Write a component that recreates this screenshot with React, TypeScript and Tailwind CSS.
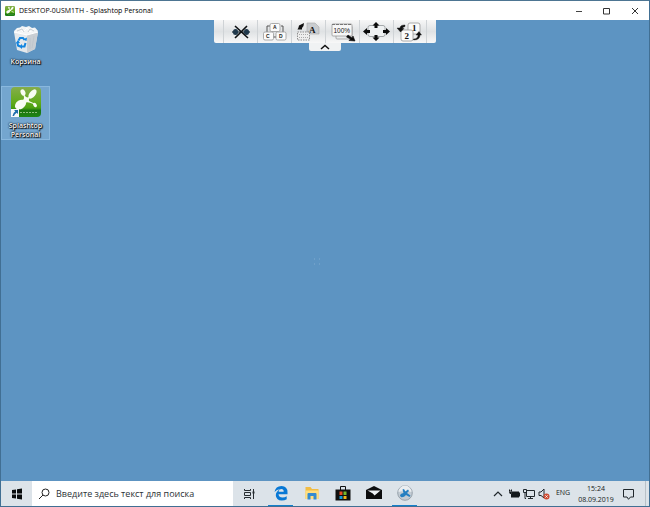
import type { ReactNode } from 'react';

const tools = [
  { label: 'Disconnect', icon: <DisconnectIcon /> },
  { label: 'Ctrl Alt Del', icon: <KeysIcon /> },
  { label: 'Keyboard', icon: <KeyboardIcon /> },
  { label: 'Scale', icon: <ScaleIcon /> },
  { label: 'Full screen', icon: <FullScreenIcon /> },
  { label: 'Switch monitor', icon: <MonitorIcon /> },
];

const apps = [
  { label: 'Microsoft Edge', icon: <EdgeIcon />, active: true },
  { label: 'Explorer', icon: <FolderIcon />, active: false },
  { label: 'Store', icon: <StoreIcon />, active: false },
  { label: 'Mail', icon: <MailIcon />, active: false },
  { label: 'Splashtop Streamer', icon: <StreamerIcon />, active: true },
];

function SplashLogo({ className }: { className: string }) {
  return (
    <svg className={className} viewBox="0 0 30 30" aria-hidden="true">
      <defs>
        <linearGradient id="splash" x1="0" y1="0" x2="0" y2="1">
          <stop offset="0" stopColor="#86ad4c" />
          <stop offset="0.5" stopColor="#62ab1c" />
          <stop offset="0.7" stopColor="#4aa010" />
          <stop offset="0.78" stopColor="#1b7410" />
          <stop offset="1" stopColor="#1f8516" />
        </linearGradient>
      </defs>
      <rect width="30" height="30" rx="4" fill="url(#splash)" />
      <g fill="#f8fcf2">
        <ellipse cx="12" cy="5.500" rx="2.300" ry="3.200" transform="rotate(-25 12 5.500)" />
        <ellipse cx="21.500" cy="7" rx="3" ry="5.500" transform="rotate(38 21.500 7)" />
        <ellipse cx="9.500" cy="17.500" rx="6" ry="4.300" transform="rotate(-32 9.500 17.500)" />
        <ellipse cx="24" cy="18" rx="1.600" ry="2.400" transform="rotate(-35 24 18)" />
        <path d="M11 13.500Q14 12.500 12.500 8h1Q15 11.500 18 10l.5 1Q17 13.500 19 14.500l4.500 2-.5.800Q18 15 16 15.200T13 18z" />
      </g>
      <path d="M9 25.500h17" stroke="#8fc07e" strokeDasharray="2 1" />
    </svg>
  );
}

function BinIcon() {
  return (
    <svg className="h-7 w-7" viewBox="0 0 28 28" aria-hidden="true">
      <path d="M2 6l3-3 3-.5L10 1l4 1 3-1 3 2 3-.5L26 6l-2 3-10 2L3 9z" fill="#f3f5f6" />
      <path d="M2 7l13 3 11-3-3 17-8 4-10-3z" fill="#e4e8eb" />
      <path d="M15 10l11-3-3 17-8 4z" fill="#c9ced3" />
      <path d="M2 7l13 3 11-3M8 3l3 4 4-4 3 4 4-3" fill="none" stroke="#fff" />
      <path d="M5 6l5-2 2 3M16 7l2-3 4 2M18 13v11M22 11l-2 12" fill="none" stroke="#bdc4ca" strokeWidth="0.800" />
      <path d="M6.500 15.500l1.500-2.500h3l1.500 2M13.500 18l-1 3.500h-3M8 21.500l-2-1L5.500 18" fill="none" stroke="#1385df" strokeWidth="2" />
      <path d="M11 14.500l3.500 1.500.5-3.500zM10 19v5l-3-2.500zM3.500 18.500l4.500-.5-2-3z" fill="#1385df" />
    </svg>
  );
}

function ShortcutArrow() {
  return (
    <svg className="absolute bottom-0 left-0 h-2 w-2" viewBox="0 0 8 8" aria-hidden="true">
      <path d="M0 0h8v8H0z" fill="#f6f8fa" />
      <path d="M3 1h4v4L5.700 3.700Q3.500 5 3 7H1.500Q1.800 4 4.300 2.300z" fill="#1d6dac" />
    </svg>
  );
}

function DisconnectIcon() {
  return (
    <svg className="h-5 w-7" viewBox="0 0 28 20" aria-hidden="true">
      <path d="M5 10h18" stroke="#3c4b55" strokeWidth="1.500" />
      <rect x="6" y="7" width="5" height="6" rx="2.500" fill="#20394c" />
      <rect x="17" y="7" width="5" height="6" rx="2.500" fill="#20394c" />
      <path d="M8 4l13 12M20 4L8 16" stroke="#0d1012" strokeWidth="1.600" />
    </svg>
  );
}

function KeysIcon() {
  return (
    <svg className="h-5 w-7" viewBox="0 0 28 20" aria-hidden="true">
      <path d="M6 10V4h4M20 4h2v6M12 15h4" fill="none" stroke="#555" />
      <g fill="#fbfbfb" stroke="#999" strokeWidth="0.800">
        <rect x="9" y="1.500" width="10" height="8" rx="1.500" />
        <rect x="2.500" y="10" width="10" height="8" rx="1.500" />
        <rect x="15" y="10" width="10" height="8" rx="1.500" />
      </g>
      <g fontFamily="Liberation Sans, sans-serif" fontWeight="bold" fontSize="5" fill="#222">
        <text x="12" y="7">A</text>
        <text x="5" y="16">C</text>
        <text x="18" y="16">D</text>
      </g>
    </svg>
  );
}

function KeyboardIcon() {
  return (
    <svg className="h-5 w-7" viewBox="0 0 28 20" aria-hidden="true">
      <path d="M12 1h8l4 4v7H12z" fill="#c9cccf" stroke="#aaa" strokeWidth="0.600" />
      <text x="14" y="10.500" fontFamily="Liberation Serif, serif" fontWeight="bold" fontSize="9" fill="#111">A</text>
      <path d="M4 3.500l5-2.500-.5 3-1.500 2v1.500H2.500l1-2z" fill="#111" />
      <rect x="2.500" y="10" width="12" height="8" fill="#eee" stroke="#777" strokeWidth="0.800" strokeDasharray="1.500 1" />
      <path d="M4 12.500h10M4 15.500h10" stroke="#aaa" strokeDasharray="1 1" />
    </svg>
  );
}

function ScaleIcon() {
  return (
    <svg className="h-5 w-7" viewBox="0 0 28 20" aria-hidden="true">
      <rect x="7" y="4" width="16" height="13" rx="1" fill="#e9ebec" stroke="#999" strokeWidth="0.800" />
      <rect x="3" y="2" width="20" height="12" rx="1" fill="#f7f7f7" stroke="#999" strokeWidth="0.800" />
      <path d="M3 2.500h20" stroke="#777" strokeDasharray="3 1" />
      <text x="4.500" y="11" fontFamily="Liberation Sans, sans-serif" fontSize="6.500" fill="#222">100%</text>
      <path d="M19 13l4 3 1-2 2 5-6-.5 1.500-1.500-4-2z" fill="#0a0a0a" stroke="#0a0a0a" strokeWidth="0.600" />
    </svg>
  );
}

function FullScreenIcon() {
  return (
    <svg className="h-5 w-7" viewBox="0 0 28 20" aria-hidden="true">
      <rect x="5" y="3.500" width="17" height="11" rx="2" fill="#eff1f2" stroke="#a4a8aa" />
      <path d="M13 0l3.500 3.500H14.500V6h-3V3.500h-2zM13 19l3.500-3.500H14.500V13h-3v2.500h-2zM0 9.500L4 6v2h3v3H4v2zM27 9.500L23 6v2h-3v3h3v2z" fill="#0b0b0b" />
    </svg>
  );
}

function MonitorIcon() {
  return (
    <svg className="h-5 w-7" viewBox="0 0 28 20" aria-hidden="true">
      <rect x="12" y="1" width="12" height="11" rx="2" fill="#fafafa" stroke="#999" strokeWidth="0.800" />
      <rect x="5" y="8" width="12" height="11" rx="2" fill="#fafafa" stroke="#999" strokeWidth="0.800" />
      <g fontFamily="Liberation Serif, serif" fontWeight="bold" fontSize="9" fill="#151515">
        <text x="16" y="9">1</text>
        <text x="8.500" y="17">2</text>
      </g>
      <path d="M9 3Q4 3 4 6H1l3.500 4L8 6.500H6.500Q6.500 5 9 4.500zM17.500 17Q22 17 22 13h-2l3-3.500 2.500 3.500H24q0 5-6.500 5z" fill="#111" stroke="#111" strokeWidth="0.400" />
    </svg>
  );
}

function EdgeIcon() {
  return (
    <svg className="h-4 w-4" viewBox="0 0 16 16" aria-hidden="true">
      <path d="M1.500 7Q2.500 1 8.500 1 14.500 1 14.500 7.500V9.300H5.500Q6 12.500 9.500 12.500q2.300 0 4.200-1.200v3Q11.800 15.500 8.700 15.500 3 15.300 2.800 10.200 2.800 6.500 7 4.200 3.700 4.200 1.500 7zM5.700 6.800h5Q10.700 4 8.500 4 6 4 5.700 6.800z" fill="#0878d5" />
    </svg>
  );
}

function FolderIcon() {
  return (
    <svg className="h-4 w-4" viewBox="0 0 16 16" aria-hidden="true">
      <path d="M1.500 2h5L8 4h6.500v10h-13z" fill="#f2bd45" />
      <path d="M1.500 5.500h13v8.500h-13z" fill="#ffdf80" />
      <path d="M3.500 14.500V9q0-1 1-1h7q1 0 1 1v5.500h-3V11h-3v3.500z" fill="#338bd1" />
    </svg>
  );
}

function StoreIcon() {
  return (
    <svg className="h-4 w-4" viewBox="0 0 16 16" aria-hidden="true">
      <path d="M5.500 5V1.500h5V5" fill="none" stroke="#111" />
      <path d="M0.500 4.500h15v11h-15z" fill="#101010" />
      <path d="M4.500 6.500h3v3.500h-3z" fill="#e84c24" />
      <path d="M8.500 6.500h3v3.500h-3z" fill="#78b82a" />
      <path d="M4.500 11h3v3h-3z" fill="#159bd7" />
      <path d="M8.500 11h3v3h-3z" fill="#f3b719" />
    </svg>
  );
}

function MailIcon() {
  return (
    <svg className="h-4 w-4" viewBox="0 0 16 16" aria-hidden="true">
      <path d="M0 5l8-4 8 4v9H0z" fill="#0c0d0e" />
      <path d="M1.500 5.500h13L8.500 10.500 6 8z" fill="#edf1f5" />
      <path d="M6 8l2.500 2.500L6.500 9.500z" fill="#0c0d0e" />
    </svg>
  );
}

function StreamerIcon() {
  return (
    <svg className="h-4 w-4" viewBox="0 0 16 16" aria-hidden="true">
      <circle cx="8" cy="8" r="7.300" fill="#c2cbd3" stroke="#89949e" strokeWidth="0.800" />
      <path d="M1.500 7a6.500 6.500 0 0113 0Q8 5 1.500 7z" fill="#e9edf0" />
      <path d="M3 11Q3 8.500 6.500 8L5.500 4.500 7 4l1.300 2.500L11 4.500l1 1.500-2 2 3.500 2.500-1 1.500-3.500-2Q7 12.500 4.500 12.300z" fill="#247fc1" />
    </svg>
  );
}

function DesktopItem({ label, selected, children }: { label: string; selected?: boolean; children: ReactNode }) {
  return (
    <button
      className={
        'flex w-[49px] flex-col items-center border text-[7px] leading-[9px] font-semibold text-white [text-shadow:0_0_2px_#000,0_0_1px_#000,1px_1px_1px_#000] ' +
        (selected ? 'h-[54px] border-[#89b8de] bg-[#74a6cf]' : 'h-[46px] border-transparent')
      }
    >
      {children}
      <span className="mt-1">{label}</span>
    </button>
  );
}

function TitleBar() {
  return (
    <header className="flex h-5 shrink-0 items-center border-t border-[#4d7592] bg-white">
      <SplashLogo className="ml-1 h-[10px] w-[10px]" />
      <h1 className="ml-1 grow text-[7px] leading-4 text-black">DESKTOP-0USM1TH - Splashtop Personal</h1>
      <button aria-label="Minimize" className="flex h-full w-7 items-center justify-center">
        <svg className="h-2 w-2" viewBox="0 0 8 8"><path d="M1 4.500h6" stroke="#444" /></svg>
      </button>
      <button aria-label="Maximize" className="flex h-full w-7 items-center justify-center">
        <svg className="h-2 w-2" viewBox="0 0 8 8"><path d="M0.500 1.500h6v5.500h-6z" fill="none" stroke="#333" /></svg>
      </button>
      <button aria-label="Close" className="flex h-full w-7 items-center justify-center">
        <svg className="h-2 w-2" viewBox="0 0 8 8"><path d="M1 1l6 6M7 1L1 7" stroke="#333" /></svg>
      </button>
    </header>
  );
}

function RemoteToolbar() {
  return (
    <div className="absolute top-0 left-1/2 flex -translate-x-1/2 flex-col items-center">
      <div className="flex h-[23px] rounded-b-xs bg-linear-to-b from-[#f7f7f7] via-[#dfe2e4] to-[#f8f8f8] px-[9px]">
        {tools.map((tool) => (
          <button
            key={tool.label}
            aria-label={tool.label}
            className="flex w-[34px] items-center justify-center border-l border-[#cfd3d6] last:border-r"
          >
            {tool.icon}
          </button>
        ))}
      </div>
      <button aria-label="Hide toolbar" className="flex h-2 w-8 items-center justify-center rounded-b-xs bg-[#f0f2f3]">
        <svg className="h-2 w-3" viewBox="0 0 12 8"><path d="M2 6l4-3.500L10 6" fill="none" stroke="#111" strokeWidth="1.500" /></svg>
      </button>
    </div>
  );
}

function Taskbar() {
  return (
    <footer className="flex h-[25px] shrink-0 items-stretch bg-[#dce3e9] text-[#151b20]">
      <button aria-label="Start" className="flex w-[31px] items-center justify-center">
        <svg className="h-3 w-3" viewBox="0 0 12 12">
          <path d="M1 2l4-.5v4H1zM6 1.300l5-.8v5H6zM1 6.500h4v4L1 10zM6 6.500h5v5l-5-.8z" fill="#080b0d" />
        </svg>
      </button>
      <label className="flex w-[201px] items-center bg-white">
        <svg className="ml-[6px] h-3 w-3 shrink-0" viewBox="0 0 12 12" aria-hidden="true">
          <circle cx="7.500" cy="4.500" r="3.500" fill="none" stroke="#222" />
          <path d="M5 7l-4 4" stroke="#222" />
        </svg>
        <input
          aria-label="Поиск"
          placeholder="Введите здесь текст для поиска"
          className="ml-[6px] w-full min-w-0 text-[9px] outline-none placeholder:text-[#2b3236]"
        />
      </label>
      <button aria-label="Task view" className="flex w-8 items-center justify-center">
        <svg className="h-3 w-3" viewBox="0 0 12 12">
          <path d="M1.500 1v1.500h6V1M1.500 4.500h6v3h-6zM1.500 11V9.500h6V11M10.500 1v10" fill="none" stroke="#262c31" />
          <path d="M9.500 3.500h2v2h-2z" fill="#262c31" />
        </svg>
      </button>
      {apps.map((app) => (
        <button key={app.label} aria-label={app.label} className="flex w-[31px] flex-col items-center justify-between">
          <span className="pt-1">{app.icon}</span>
          {app.active && <span className="h-px w-[25px] bg-[#147fcb]" />}
        </button>
      ))}
      <div className="ml-auto flex items-center">
        <button aria-label="Hidden icons" className="flex w-4 justify-center">
          <svg className="h-3 w-3" viewBox="0 0 12 12"><path d="M2 8l4-4 4 4" fill="none" stroke="#20272c" strokeWidth="1.200" /></svg>
        </button>
        <button aria-label="Battery" className="flex w-[15px] justify-center">
          <svg className="h-3 w-3" viewBox="0 0 12 12">
            <path d="M4 3.500h7v1h1v4h-1v1H3V6z" fill="#14191c" />
            <path d="M1 3h3M1.500 1.500v2M3.500 1.500v2M1.500 4.500h2L2.500 6z" fill="#14191c" stroke="#14191c" />
          </svg>
        </button>
        <button aria-label="Network" className="flex w-[15px] justify-center">
          <svg className="h-3 w-3" viewBox="0 0 12 12">
            <path d="M3.500 2.500h8v6h-8zM7.500 8.500v2M5 10.500h5M0.500 1.500h3v3h-3zM2 4.500v6h1" fill="none" stroke="#20272c" />
          </svg>
        </button>
        <button aria-label="Volume" className="flex w-[15px] justify-center">
          <svg className="h-3 w-3" viewBox="0 0 12 12">
            <path d="M1 4h2l3-3v9L3 7.500H1z" fill="none" stroke="#20272c" />
            <circle cx="8.500" cy="8.500" r="3" fill="#cf4a31" />
            <path d="M7.300 7.300l2.400 2.400M9.700 7.300L7.300 9.700" stroke="#fff" strokeWidth="0.800" />
          </svg>
        </button>
        <button className="w-6 text-center text-[7px]">ENG</button>
        <button className="flex w-[42px] flex-col items-center text-[7px] leading-[11px]">
          <time>15:24</time>
          <time>08.09.2019</time>
        </button>
        <button aria-label="Notifications" className="flex w-6 justify-center">
          <svg className="h-3 w-3" viewBox="0 0 12 12">
            <path d="M0.500 1.500h10v7.500H7.500L5.500 11.300 4 9H0.500z" fill="none" stroke="#20272c" />
          </svg>
        </button>
        <button aria-label="Show desktop" className="ml-1 h-[25px] w-1 border-l border-[#b8c1c8]" />
      </div>
    </footer>
  );
}

export default function App() {
  return (
    <div className="flex h-screen flex-col border-x border-b border-[#416f93] bg-[#5d94c2] font-['Open_Sans','Noto_Sans',sans-serif]">
      <TitleBar />
      <main className="relative grow">
        <div className="flex flex-col gap-4 pt-1">
          <DesktopItem label="Корзина">
            <BinIcon />
          </DesktopItem>
          <DesktopItem label="Splashtop Personal" selected>
            <span className="relative">
              <SplashLogo className="h-[30px] w-[30px]" />
              <ShortcutArrow />
            </span>
          </DesktopItem>
        </div>
        <RemoteToolbar />
        <svg className="absolute top-1/2 left-1/2 h-4 w-4 -translate-x-full" viewBox="0 0 16 16" aria-hidden="true">
          <path d="M5 8h1M10 8h1M5 13h1M10 13h1" stroke="#82acd0" />
        </svg>
      </main>
      <Taskbar />
    </div>
  );
}
